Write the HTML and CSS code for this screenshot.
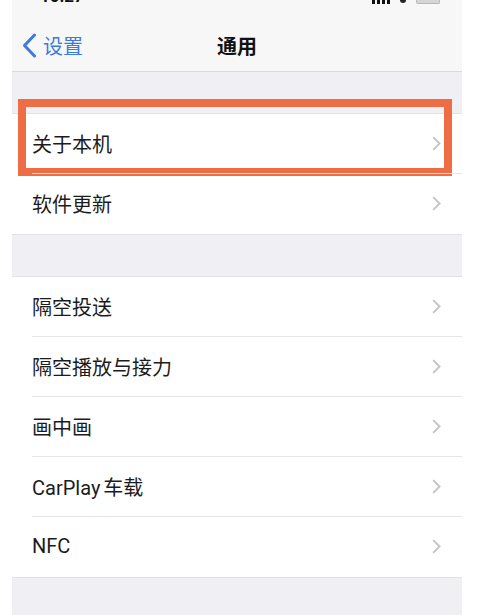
FILE: index.html
```html
<!DOCTYPE html>
<html lang="zh-CN">
<head>
<meta charset="utf-8">
<title>通用</title>
<link rel="stylesheet" href="styles.css">
</head>
<body>
<div class="screen">
  <div class="status">
    <span class="time">10:27</span>
    <span class="status-right">
      <span class="signal"><i></i><i></i><i></i><i></i></span>
      <span class="wifi"></span>
      <span class="battery"></span>
    </span>
  </div>
  <header class="nav">
    <a class="back">
      <svg class="back-icon" width="15" height="25" viewBox="0 0 15 25"><path d="M12.5 2 L2.5 12.5 L12.5 23" fill="none" stroke="#3a7be0" stroke-width="3" stroke-linecap="round" stroke-linejoin="round"/></svg>
      <span>设置</span>
    </a>
    <h1 class="title">通用</h1>
    <span></span>
  </header>

  <div class="gap"></div>
  <ul class="group">
    <li class="row highlighted"><span class="label">关于本机</span><svg class="chev" width="9" height="15" viewBox="0 0 9 15"><path d="M1.2 1.2 L7.6 7.5 L1.2 13.8" fill="none" stroke="#c3c3c8" stroke-width="1.8"/></svg><span class="mark"></span></li>
    <li class="row"><span class="label">软件更新</span><svg class="chev" width="9" height="15" viewBox="0 0 9 15"><path d="M1.2 1.2 L7.6 7.5 L1.2 13.8" fill="none" stroke="#c3c3c8" stroke-width="1.8"/></svg></li>
  </ul>

  <div class="gap"></div>
  <ul class="group">
    <li class="row"><span class="label">隔空投送</span><svg class="chev" width="9" height="15" viewBox="0 0 9 15"><path d="M1.2 1.2 L7.6 7.5 L1.2 13.8" fill="none" stroke="#c3c3c8" stroke-width="1.8"/></svg></li>
    <li class="row"><span class="label">隔空播放与接力</span><svg class="chev" width="9" height="15" viewBox="0 0 9 15"><path d="M1.2 1.2 L7.6 7.5 L1.2 13.8" fill="none" stroke="#c3c3c8" stroke-width="1.8"/></svg></li>
    <li class="row"><span class="label">画中画</span><svg class="chev" width="9" height="15" viewBox="0 0 9 15"><path d="M1.2 1.2 L7.6 7.5 L1.2 13.8" fill="none" stroke="#c3c3c8" stroke-width="1.8"/></svg></li>
    <li class="row"><span class="label">CarPlay<span class="thin"> </span>车载</span><svg class="chev" width="9" height="15" viewBox="0 0 9 15"><path d="M1.2 1.2 L7.6 7.5 L1.2 13.8" fill="none" stroke="#c3c3c8" stroke-width="1.8"/></svg></li>
    <li class="row"><span class="label">NFC</span><svg class="chev" width="9" height="15" viewBox="0 0 9 15"><path d="M1.2 1.2 L7.6 7.5 L1.2 13.8" fill="none" stroke="#c3c3c8" stroke-width="1.8"/></svg></li>
  </ul>
  <div class="gap tail"></div>
</div>
</body>
</html>
```
FILE: styles.css
```css
html, body {
  margin: 0;
  padding: 0;
  background: #ffffff;
}

body {
  font-family: "Roboto", "Noto Sans CJK SC", "Noto Sans", sans-serif;
  color: #1c1c1e;
}

.screen {
  margin: 0 15px 0 12px;
  width: 450px;
}

.status {
  height: 10px;
  overflow: hidden;
  background: #f7f7f8;
  display: flex;
  justify-content: space-between;
  align-items: flex-end;
  padding: 0 22px 0 28px;
}

.time {
  font-family: "Roboto", sans-serif;
  font-weight: 700;
  font-size: 17px;
  line-height: 17px;
  margin-top: -12px;
  align-self: flex-start;
  color: #111;
}

.status-right {
  display: flex;
  align-items: flex-start;
  gap: 10px;
  align-self: flex-start;
}

.signal {
  display: flex;
  gap: 2px;
  align-items: flex-start;
}

.signal i {
  display: block;
  width: 3px;
  height: 4px;
  background: #111;
}

.wifi {
  display: block;
  width: 6px;
  height: 3px;
  background: #222;
  border-radius: 0 0 3px 3px;
}

.battery {
  display: block;
  width: 22px;
  height: 3px;
  border: 1px solid #b9b9bd;
  border-top: none;
  background: #d5d5d8;
  border-radius: 0 0 2px 2px;
}

.nav {
  height: 62px;
  box-sizing: border-box;
  padding-top: 9px;
  background: #f7f7f8;
  border-bottom: 1px solid #dadade;
  display: grid;
  grid-template-columns: 1fr auto 1fr;
  align-items: center;
}

.back {
  display: flex;
  align-items: center;
  gap: 6px;
  padding-left: 10px;
  color: #3a7be0;
  font-size: 20px;
}

.back-icon {
  display: block;
}

.title {
  margin: 0;
  font-size: 20px;
  font-weight: 700;
  color: #111;
}

.gap {
  height: 41px;
  background: #efeff4;
}

.gap.tail {
  height: 40px;
}

.group {
  list-style: none;
  margin: 0;
  padding: 0;
  background: #fff;
  border-top: 1px solid #e3e3e7;
  border-bottom: 1px solid #e3e3e7;
}

.row {
  position: relative;
  height: 60px;
  display: flex;
  align-items: center;
  justify-content: space-between;
  padding: 0 21px 2px 20px;
  box-sizing: border-box;
}

.row + .row::before {
  content: "";
  position: absolute;
  left: 20px;
  right: 0;
  top: -1px;
  border-top: 1px solid #e6e6ea;
}

.label {
  font-size: 20px;
}

.thin {
  font-size: 12px;
}

.chev {
  display: block;
}

.mark {
  position: absolute;
  left: 6px;
  right: 10px;
  top: -15px;
  bottom: -2px;
  border: 8px solid #ee6d45;
  pointer-events: none;
}
```
